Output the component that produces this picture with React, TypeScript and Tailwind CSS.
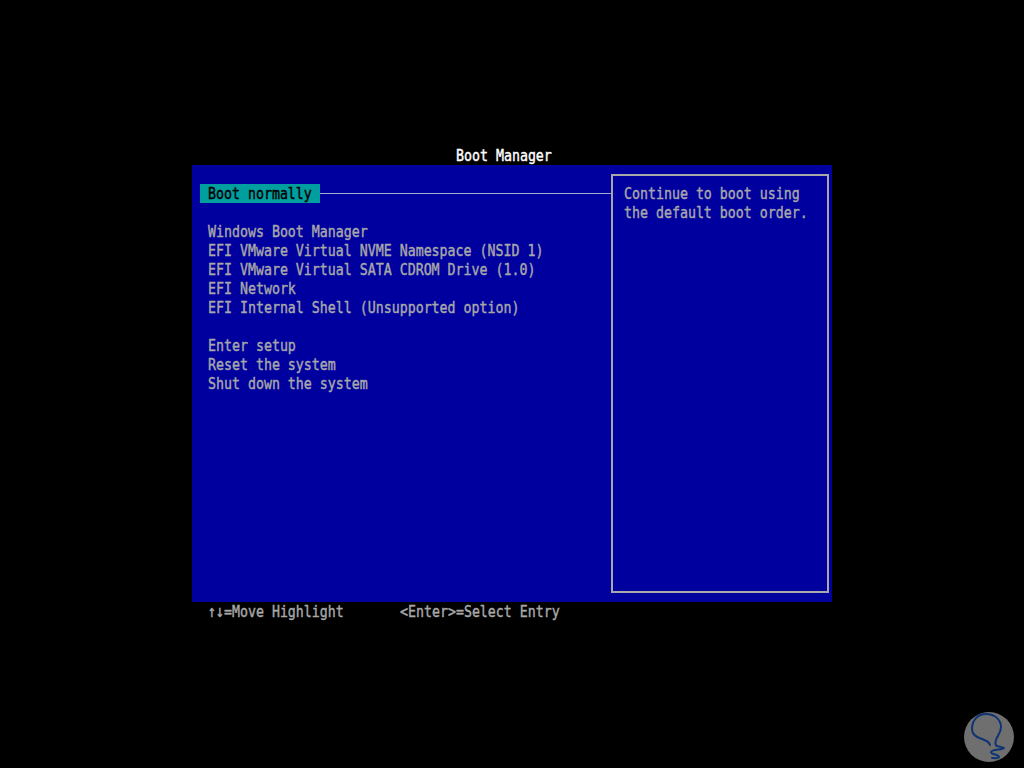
const monoClass = "font-['DejaVu_Sans_Mono',monospace] text-[13.28px] leading-[20px] whitespace-pre [-webkit-text-stroke:0.35px_currentColor]"
const textClass = `${monoClass} block h-[19px] origin-center scale-y-[1.25] opacity-[.999]`

const bootEntries = [
  'Windows Boot Manager',
  'EFI VMware Virtual NVME Namespace (NSID 1)',
  'EFI VMware Virtual SATA CDROM Drive (1.0)',
  'EFI Network',
  'EFI Internal Shell (Unsupported option)',
]

const systemEntries = ['Enter setup', 'Reset the system', 'Shut down the system']

function Watermark() {
  return (
    <div className="absolute left-[964px] top-[712px] w-[50px] h-[50px] rounded-full bg-[#6f6f6f]">
      <svg viewBox="0 0 50 50" className="w-full h-full" fill="none">
        <path
          d="M26 33 C 25 29 22 29 18 27 C 11 25 8 22 8 17 C 8 8 14 2 22 2 C 31 2 37 8 37 15 C 37 21 33 24 32 28 C 31 31 31 33 33 34 C 36 35 40 35 40 36 C 38 38 28 37 27 40 C 27 43 35 42 35 45 C 34 47 30 46 28 46"
          stroke="#0f3473"
          strokeWidth="2"
          strokeLinecap="round"
          strokeLinejoin="round"
        />
      </svg>
    </div>
  )
}

export default function App() {
  return (
    <div className="relative w-full h-screen overflow-hidden bg-black pt-[146px]">
      <div className="pl-[456px] text-white">
        <span className={textClass}>Boot Manager</span>
      </div>

      <div className="ml-[192px] w-[640px] h-[437px] bg-[#00009f] flex pl-2 pr-[3px] pt-[9px] pb-[9px] text-[#a8a8a8]">
        <div className="flex-1 min-w-0 pt-[10px]">
          <div className="flex items-center">
            <div className="w-[120px] h-[19px] pl-2 bg-[#009f9f] text-black">
              <span className={textClass}>Boot normally</span>
            </div>
            <div className="flex-1 h-px bg-[#a8a8d0]" />
          </div>

          <div className="mt-[19px] pl-2">
            {bootEntries.map((entry) => (
              <span key={entry} className={textClass}>
                {entry}
              </span>
            ))}
          </div>

          <div className="mt-[19px] pl-2">
            {systemEntries.map((entry) => (
              <span key={entry} className={textClass}>
                {entry}
              </span>
            ))}
          </div>
        </div>

        <div className="w-[218px] border-2 border-[#a8a8a8] pl-[11px] pt-2">
          <span className={textClass}>Continue to boot using</span>
          <span className={textClass}>the default boot order.</span>
        </div>
      </div>

      <div className="pl-[208px] flex text-[#a8a8a8]">
        <span className={`${textClass} w-[192px]`}>↑↓=Move Highlight</span>
        <span className={textClass}>{'<Enter>=Select Entry'}</span>
      </div>

      <Watermark />
    </div>
  )
}
